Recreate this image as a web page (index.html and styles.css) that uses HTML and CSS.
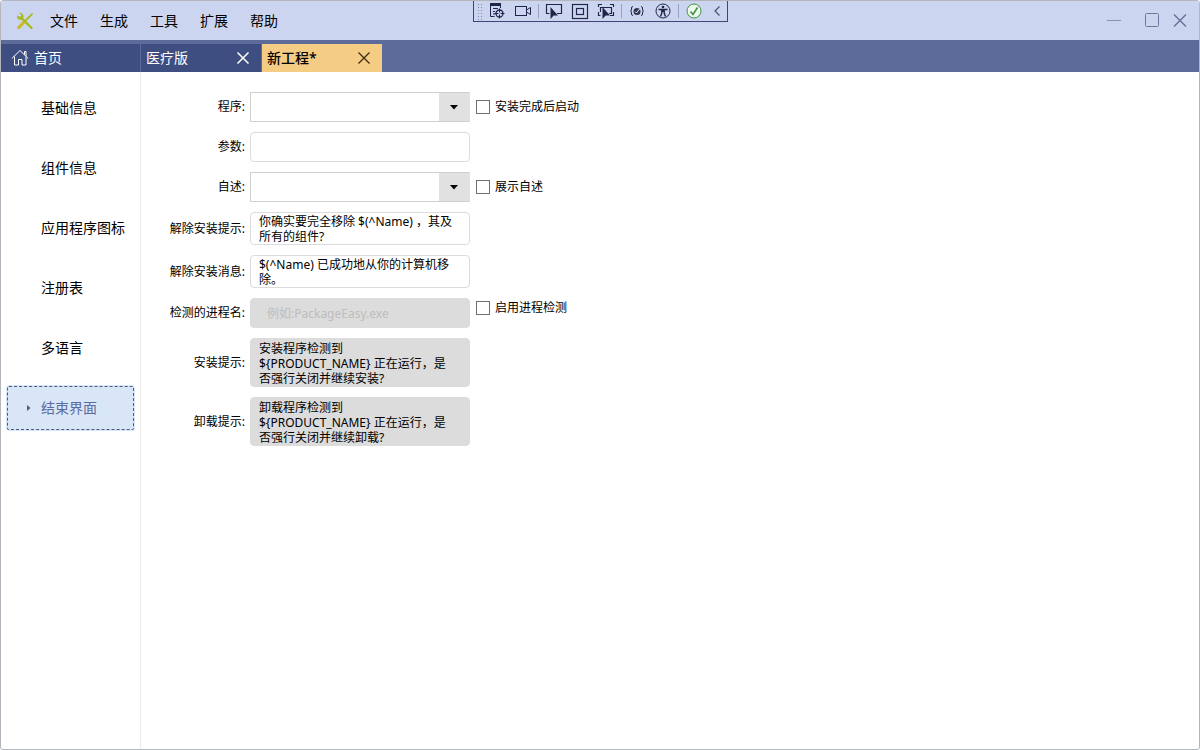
FILE: index.html
```html
<!DOCTYPE html>
<html lang="zh-CN">
<head>
<meta charset="utf-8">
<title>新工程</title>
<link rel="stylesheet" href="styles.css">
</head>
<body>
<div class="window">
  <header class="titlebar">
    <svg class="logo" width="18" height="18" viewBox="0 0 18 18" fill="none">
      <path d="M5 5.500 15.500 16" stroke="#a9ba1c" stroke-width="2.400" stroke-linecap="round"/>
      <path d="M3 .800 5.300 3 4.200 5 1 3.500C.600 6.500 2.600 8.500 5.400 7.500L7.500 5.400C8 2.600 5.800.200 3 .800Z" fill="#a9ba1c"/>
      <path d="M8.500 9.500 2.800 15.500" stroke="#c9bb20" stroke-width="3.200" stroke-linecap="round"/>
      <path d="M8.500 9.500 16 2.200" stroke="#a9ba1c" stroke-width="1.800" stroke-linecap="round"/>
    </svg>
    <nav class="menu">
      <button type="button">文件</button>
      <button type="button">生成</button>
      <button type="button">工具</button>
      <button type="button">扩展</button>
      <button type="button">帮助</button>
    </nav>
    <div class="window-buttons">
      <button type="button" aria-label="最小化"><svg width="16" height="16" viewBox="0 0 16 16"><path d="M1 7.500h14" stroke="#8b93b5"/></svg></button>
      <button type="button" class="maximize" aria-label="最大化"><svg width="16" height="16" viewBox="0 0 16 16"><rect x="1.500" y=".500" width="13" height="13" rx="1" fill="none" stroke="#6f789f"/></svg></button>
      <button type="button" aria-label="关闭"><svg width="16" height="16" viewBox="0 0 16 16"><path d="M2 1.500l12 12M14 1.500l-12 12" stroke="#6a7399" stroke-width="1.500"/></svg></button>
    </div>
  </header>

  <div class="debug-bar">
    <span class="grip"></span>
    <button type="button" aria-label="可视化树"><svg width="18" height="18" viewBox="0 0 18 18" fill="none" stroke="#20264a"><path d="M2 2.500h11" stroke-width="3"/><path d="M2.500 3v11.500h4M5 6.500h5M5 9.500h2M5 12h2M12.500 4v2"/><circle cx="11.500" cy="11.500" r="3.500" stroke-width="1.300"/><path d="M11.500 6.500v4M11.500 12.500v4M6.500 11.500h4M12.500 11.500h4"/></svg></button>
    <button type="button" aria-label="录制"><svg width="18" height="18" viewBox="0 0 18 18" fill="none" stroke="#20264a"><rect x="1.500" y="4.500" width="11" height="9"/><path d="M12.500 8 16.500 5.500v7L12.500 10"/></svg></button>
    <span class="divider"></span>
    <button type="button" aria-label="选择元素"><svg width="18" height="18" viewBox="0 0 18 18" fill="none"><path d="M4.500 11.500h-3v-9h15v9H12" stroke="#20264a" stroke-width="1.200"/><path d="M5.500 5v12l3.200-3.500H13z" fill="#20264a"/></svg></button>
    <button type="button" aria-label="布局装饰器"><svg width="18" height="18" viewBox="0 0 18 18" fill="none" stroke="#20264a"><rect x="1.500" y="2.500" width="15" height="14" stroke-width="1.200"/><rect x="5.500" y="6.500" width="7" height="6" stroke-width="1.200"/></svg></button>
    <button type="button" aria-label="跟踪焦点"><svg width="18" height="18" viewBox="0 0 18 18" fill="none"><path d="M1.500 5V2.500H5M13 2.500h3.500V5M16.500 10v3.500H13M3.500 13.500h-2V10M3.500 10V5.500h11v6H12" stroke="#20264a" stroke-width="1.200"/><path d="M5.500 5v12l3.200-3.500H13z" fill="#20264a"/></svg></button>
    <span class="divider"></span>
    <button type="button" aria-label="绑定失败"><svg width="18" height="18" viewBox="0 0 18 18" fill="none" stroke="#20264a"><path d="M5 4.500q-2 0-1.500 2.500 0 2-1 2 1 0 1 2-.5 2.500 1.500 2.500M13 4.500q2 0 1.500 2.500 0 2 1 2-1 0-1 2 .5 2.500-1.500 2.500"/><circle cx="9" cy="9.500" r="3.500" fill="#30354f" stroke="none"/><path d="m7 9.500 1.500 1.500 3-4" stroke="#e7ebf8"/></svg></button>
    <button type="button" aria-label="辅助功能"><svg width="18" height="18" viewBox="0 0 18 18" fill="none" stroke="#20264a"><circle cx="9" cy="9" r="7"/><circle cx="9" cy="5" r="1.300" fill="#20264a" stroke="none"/><path d="M4.500 7.500h9M9 7v3M7.800 8v3L6.500 14.500M10.200 8v3l1.300 3.500" stroke-width="1.400"/></svg></button>
    <span class="divider"></span>
    <button type="button" aria-label="热重载"><svg width="18" height="18" viewBox="0 0 18 18" fill="none"><circle cx="9" cy="9" r="7" fill="#eef7ed" stroke="#3d9440"/><path d="m5.500 9.500 2.500 3 4.500-7" stroke="#3d9440" stroke-width="1.600"/></svg></button>
    <button type="button" aria-label="折叠"><svg width="18" height="18" viewBox="0 0 18 18" fill="none"><path d="M10.500 4.500 6 9l4.500 4.500" stroke="#4a5170" stroke-width="1.200"/></svg></button>
  </div>

  <div class="tabs">
    <button type="button" class="tab home">
      <svg width="18" height="18" viewBox="0 0 18 18" fill="none" stroke="#fff"><path d="M.800 9.500 9 1.500l8.200 8M13.500 5.500V2.500h1.500v4.500M3.500 7.500v8.500h4v-5.500h3.500V16h4V7.500"/></svg>
      <span>首页</span>
    </button>
    <div class="tab"><span>医疗版</span><button type="button" aria-label="关闭医疗版"><svg width="14" height="14" viewBox="0 0 14 14"><path d="m1.500 1.500 11 11M12.500 1.500l-11 11" stroke="#fff" stroke-width="1.500"/></svg></button></div>
    <div class="tab active"><span>新工程*</span><button type="button" aria-label="关闭新工程"><svg width="14" height="14" viewBox="0 0 14 14"><path d="m1.500 1.500 11 11M12.500 1.500l-11 11" stroke="#3c2d10" stroke-width="1.300"/></svg></button></div>
  </div>

  <div class="body">
    <nav class="sidebar">
      <button type="button">基础信息</button>
      <button type="button">组件信息</button>
      <button type="button">应用程序图标</button>
      <button type="button">注册表</button>
      <button type="button">多语言</button>
      <button type="button" class="selected"><svg width="4" height="6" viewBox="0 0 4 6"><path d="M0 0l3.500 3L0 6z" fill="#4c5a8c"/></svg>结束界面</button>
    </nav>

    <main>
      <form class="form">
        <label class="name" for="program">程序:</label>
        <div class="combo"><select id="program"></select><svg width="8" height="5" viewBox="0 0 8 5"><path d="M0 0h8L4 4.500z"/></svg></div>
        <label class="check"><input type="checkbox"><span>安装完成后启动</span></label>

        <label class="name" for="args">参数:</label>
        <input class="field" id="args" type="text">

        <label class="name" for="readme">自述:</label>
        <div class="combo"><select id="readme"></select><svg width="8" height="5" viewBox="0 0 8 5"><path d="M0 0h8L4 4.500z"/></svg></div>
        <label class="check"><input type="checkbox"><span>展示自述</span></label>

        <label class="name" for="unprompt">解除安装提示:</label>
        <textarea class="field two" id="unprompt">你确实要完全移除 $(^Name) ，其及所有的组件?</textarea>

        <label class="name" for="unmessage">解除安装消息:</label>
        <textarea class="field two" id="unmessage">$(^Name) 已成功地从你的计算机移除。</textarea>

        <label class="name" for="process">检测的进程名:</label>
        <input class="field" id="process" type="text" placeholder="例如:PackageEasy.exe" disabled>
        <label class="check top"><input type="checkbox"><span>启用进程检测</span></label>

        <label class="name" for="setup">安装提示:</label>
        <textarea class="field three" id="setup" disabled>安装程序检测到
${PRODUCT_NAME} 正在运行，是否强行关闭并继续安装?</textarea>

        <label class="name" for="remove">卸载提示:</label>
        <textarea class="field three" id="remove" disabled>卸载程序检测到
${PRODUCT_NAME} 正在运行，是否强行关闭并继续卸载?</textarea>
      </form>
    </main>
  </div>
</div>
</body>
</html>
```
FILE: styles.css
```css
* {
  box-sizing: border-box;
}

body {
  margin: 0;
  font: 12px/16px "Noto Sans", "Noto Sans CJK SC", sans-serif;
  color: #000;
  background: #fff;
}

button {
  margin: 0;
  padding: 0;
  border: 0;
  background: none;
  font: inherit;
  color: inherit;
}

svg {
  display: block;
  flex: none;
}

.window {
  position: relative;
  display: flex;
  flex-direction: column;
  min-height: 100vh;
  border: 1px solid #b4b6be;
  border-radius: 3px;
  overflow: hidden;
}

.titlebar {
  display: flex;
  align-items: center;
  height: 39px;
  padding: 0 11px 0 15px;
  background: #ccd5f0;
}

.menu {
  display: flex;
  gap: 22px;
  margin-left: 16px;
  font-size: 14px;
  line-height: 20px;
}

.window-buttons {
  display: flex;
  gap: 12px;
  margin-left: auto;
}

.window-buttons .maximize {
  margin-left: 10px;
}

.debug-bar {
  position: absolute;
  top: 0;
  left: 472px;
  display: flex;
  align-items: center;
  gap: 8px;
  height: 21px;
  padding: 0 0 0 3px;
  border: 1px solid #3d4674;
  border-top: 0;
  background: #ccd5f0;
}

.debug-bar .grip {
  width: 6px;
  height: 17px;
  margin-right: -3px;
  background: radial-gradient(circle, #7d88b3 1px, transparent 1px) 0 0 / 3px 3px;
}

.debug-bar .divider {
  width: 1px;
  height: 14px;
  margin: 0 -2px;
  background: #9aa3c4;
}

.debug-bar button:last-child {
  margin-left: -2px;
}

.tabs {
  display: flex;
  gap: 1px;
  height: 32px;
  padding-top: 4px;
  background: #5c6b99;
  font-size: 14px;
  line-height: 20px;
}

.tab {
  display: flex;
  align-items: center;
  justify-content: space-between;
  width: 120px;
  padding: 0 11px 0 5px;
  background: #3e4e80;
  color: #fff;
}

.tab.home {
  justify-content: flex-start;
  gap: 5px;
  width: 139px;
  padding-left: 10px;
}

.tab.active {
  background: #f5cc84;
  color: #000;
  font-weight: 500;
}

.body {
  display: flex;
  flex: 1;
}

.sidebar {
  display: flex;
  flex-direction: column;
  gap: 14px;
  width: 140px;
  padding: 13px 5px 0;
  border-right: 1px solid #ececec;
  font-size: 14px;
  line-height: 20px;
}

.sidebar button {
  display: flex;
  align-items: center;
  height: 46px;
  padding-left: 35px;
  border-radius: 3px;
  text-align: left;
}

.sidebar .selected {
  gap: 10px;
  padding-left: 21px;
  background: #d9e6f7;
  color: #5c6b9f;
  outline: 1px dashed #4c5a80;
  outline-offset: -2px;
}

main {
  flex: 1;
  padding: 20px;
}

.form {
  display: grid;
  grid-template-columns: 84px 220px auto;
  gap: 10px 5px;
  align-items: center;
  justify-content: start;
}

.name {
  grid-column: 1;
  text-align: right;
  white-space: nowrap;
}

.field {
  display: block;
  width: 100%;
  height: 30px;
  margin: 0;
  padding: 0 12px 0 8px;
  border: 1px solid #dcdcdc;
  border-radius: 4px;
  background: #fff;
  color: #000;
  font: inherit;
  line-height: 15px;
  resize: none;
  overflow: hidden;
}

.field.two {
  height: 33px;
  padding-top: 1px;
}

.field.three {
  height: 49px;
  padding-top: 2px;
}

.field:disabled {
  border-color: #dcdcdc;
  background: #dcdcdc;
}

input.field:disabled {
  padding-left: 16px;
}

.field::placeholder {
  color: #bdbdbd;
}

.combo {
  display: grid;
  align-items: center;
}

.combo select,
.combo svg {
  grid-area: 1 / 1;
}

.combo select {
  appearance: none;
  width: 100%;
  height: 30px;
  border: 1px solid #cfcfcf;
  border-right-color: #e1e1e1;
  border-radius: 0;
  background: linear-gradient(#e1e1e1, #e1e1e1) right / 31px 100% no-repeat border-box #fff;
  font: inherit;
}

.combo svg {
  justify-self: end;
  margin-right: 12px;
  pointer-events: none;
}

.check {
  display: flex;
  align-items: center;
  gap: 5px;
  padding-left: 1px;
}

.check.top {
  align-self: start;
  padding-top: 2px;
}

.check input {
  appearance: none;
  width: 14px;
  height: 14px;
  margin: 0;
  border: 1px solid #707070;
  background: #fff;
}
```
